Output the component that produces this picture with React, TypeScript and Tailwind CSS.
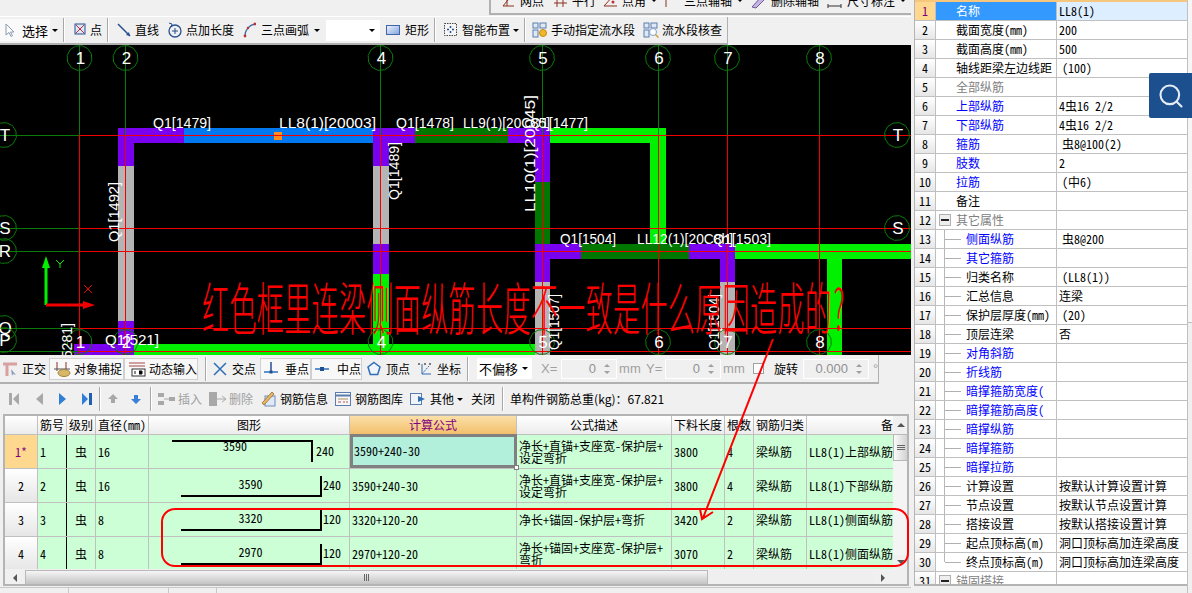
import React from "react";
import { Search } from "lucide-react";

const Ico = ({ children, w = 16 }: { children: React.ReactNode; w?: number }) => (
  <svg width={w} height={16} viewBox={`0 0 ${w} 16`} className="shrink-0">
    {children}
  </svg>
);

const Caret = ({ className = "" }: { className?: string }) => (
  <span className={`w-0 h-0 shrink-0 border-x-[3px] border-t-[3px] border-x-transparent border-t-black ${className}`} />
);

const Sep = ({ className = "" }: { className?: string }) => (
  <span className={`w-[2px] h-[24px] shrink-0 bg-[#a8a8a8] border-r border-white ${className}`} />
);

const Tool = ({ icon, label, className = "", muted, gap = "gap-[5px]" }: { icon?: React.ReactNode; label: string; className?: string; muted?: boolean; gap?: string }) => (
  <span className={`flex items-center shrink-0 whitespace-nowrap ${gap} ${muted ? "text-[#a0a0a0]" : ""} ${className}`}>
    {icon}
    {label}
  </span>
);

// toolbar icons
const icons = {
  cursor: <Ico><path d="M4 2v11l3-2.5 2 4 1.500-.8-2-3.700h3.500z" fill="#fff" stroke="#8a9ab0" /></Ico>,
  point: <Ico w={12}><rect x="1" y="2" width="10" height="10" fill="#dde6f5" stroke="#27508f" /><path d="M2 3l8 8M10 3l-8 8" stroke="#c0303a" /></Ico>,
  line: <Ico w={14}><path d="M1 2l12 12" stroke="#27508f" strokeWidth="1.500" /><path d="M13 14l-4-1 3-3z" fill="#27508f" /></Ico>,
  lenAdd: <Ico><circle cx="8" cy="9" r="6" fill="none" stroke="#27508f" strokeWidth="1.300" /><path d="M5 9h6M8 6v6" stroke="#27508f" /><path d="M2 1l3 1-1 3" fill="none" stroke="#27508f" /></Ico>,
  arc: <Ico w={13}><path d="M2 14C2 8 6 3 12 2" fill="none" stroke="#3b6a9f" strokeWidth="1.300" /><circle cx="2" cy="14" r="1.400" fill="#c0303a" /><circle cx="12" cy="2" r="1.400" fill="#c0303a" /><circle cx="5" cy="6" r="1.200" fill="#c0303a" /></Ico>,
  rect: <Ico w={14}><defs><linearGradient id="rg" x1="0" y1="0" x2="1" y2="1"><stop offset="0" stopColor="#f2f6fd" /><stop offset="1" stopColor="#7ea2de" /></linearGradient></defs><rect x="0.500" y="3.500" width="13" height="9" fill="url(#rg)" stroke="#3f66a8" /></Ico>,
  smart: <Ico w={15}><rect x="1.500" y="1.500" width="12" height="12" fill="#f6f6f6" stroke="#444" strokeDasharray="1.500 1" /><path d="M7.500 4v2M7.500 9v2M4 7.500h2M9 7.500h2" stroke="#27508f" strokeWidth="1.500" /></Ico>,
  flow: <Ico><rect x="1" y="1" width="5" height="5" fill="#dfe8f7" stroke="#5a7cae" /><rect x="8" y="1" width="6" height="5" fill="#dfe8f7" stroke="#5a7cae" /><rect x="1" y="8" width="5" height="7" fill="#dfe8f7" stroke="#5a7cae" /><circle cx="11" cy="11" r="3.500" fill="#f0b82a" stroke="#c98a10" /></Ico>,
  flowCheck: <Ico><rect x="1" y="1" width="5" height="5" fill="#dfe8f7" stroke="#5a7cae" /><rect x="8" y="1" width="6" height="5" fill="#dfe8f7" stroke="#5a7cae" /><rect x="1" y="8" width="5" height="7" fill="#dfe8f7" stroke="#5a7cae" /><circle cx="10" cy="10" r="3.500" fill="#fff" stroke="#7fa3c9" /><path d="M12.500 12.500l3 3" stroke="#c9a23a" strokeWidth="1.500" /></Ico>,
  ortho: <Ico><path d="M1 3h14M5 3v12" stroke="#d8a0a0" strokeWidth="3" /><path d="M9 8l5 6-3-1-1 2z" fill="#8aa0b8" /></Ico>,
  snap: <Ico w={18}><path d="M4 1v9M13 1v9" stroke="#8a3020" /><path d="M1 8h16" stroke="#555" /><ellipse cx="11" cy="12" rx="6" ry="3.500" fill="#d8b868" stroke="#a0823c" /></Ico>,
  dyn: <Ico w={18}><path d="M1 2h16M1 5h16" stroke="#a84848" /><rect x="4" y="8" width="13" height="7" fill="#fff" stroke="#333" /><path d="M7 10v3M11 10h3v3h-3" stroke="#111" /></Ico>,
  cross: <Ico><path d="M2 2l12 12M14 2L2 14" stroke="#2f6db5" strokeWidth="1.500" /></Ico>,
  perp: <Ico><path d="M1 11h14" stroke="#5f93cf" strokeWidth="2" /><path d="M8 1v10" stroke="#27508f" strokeWidth="1.500" /><rect x="6.500" y="9.500" width="3" height="3" fill="#27508f" /></Ico>,
  mid: <Ico><path d="M1 8h14" stroke="#5f93cf" strokeWidth="2" /><rect x="6" y="6" width="4" height="4" fill="#1f4f95" /></Ico>,
  vertex: <Ico><path d="M8 1.500l6 4.500-2.300 7.500H4.300L2 6z" fill="#eef4fb" stroke="#2f6db5" strokeWidth="1.500" /></Ico>,
  coord: <Ico><path d="M5 3v10h9" fill="none" stroke="#2f6db5" /><path d="M5 13l7-8" stroke="#2f6db5" strokeDasharray="2 1" /><circle cx="2" cy="3" r="1" fill="#555" /><circle cx="13" cy="3" r="1" fill="#555" /><circle cx="8" cy="3" r="1" fill="#555" /></Ico>,
  first: <Ico w={10}><rect x="0" y="2" width="3" height="12" fill="#a8a8a8" /><path d="M10 2v12L4 8z" fill="#a8a8a8" /></Ico>,
  prev: <Ico w={8}><path d="M8 2v12L1 8z" fill="#a8a8a8" /></Ico>,
  next: <Ico w={8}><path d="M0 2v12l7-6z" fill="#2f7fd6" /></Ico>,
  last: <Ico w={10}><path d="M0 2v12l6-6z" fill="#2f7fd6" /><rect x="7" y="2" width="3" height="12" fill="#1d5fb0" /></Ico>,
  up: <Ico w={10}><path d="M5 3l5 5H7v4H3V8H0z" fill="#a8a8a8" /></Ico>,
  down: <Ico w={10}><path d="M5 13l5-5H7V4H3v4H0z" fill="#3a7fd6" /></Ico>,
  insert: <Ico w={18}><rect x="0" y="2" width="6" height="4" fill="#a8a8a8" /><rect x="0" y="10" width="6" height="4" fill="#a8a8a8" /><rect x="11" y="6" width="6" height="4" fill="#a8a8a8" /><path d="M6 8h5" stroke="#a8a8a8" /></Ico>,
  del: <Ico w={18}><rect x="0" y="1" width="8" height="14" fill="#a8a8a8" /><path d="M8 8h9M13 5l4 3-4 3" fill="none" stroke="#a8a8a8" /></Ico>,
  info: <Ico w={15}><rect x="4" y="5" width="10" height="10" fill="#dfe8f7" stroke="#6c8cba" /><path d="M1 12L11 1l2 2L3 14z" fill="#e8b860" stroke="#8a5a20" strokeWidth="0.700" /></Ico>,
  lib: <Ico><rect x="0.500" y="1.500" width="15" height="13" fill="#f6f6f6" stroke="#5a7cae" /><path d="M1 4.500h14" stroke="#5a7cae" strokeWidth="2" /><path d="M3 8h10" stroke="#a89060" /><path d="M3 11h3M8 11h2M11 11h2" stroke="#c05050" /></Ico>,
  other: <Ico><rect x="0.500" y="2.500" width="11" height="11" fill="#f0f3f8" stroke="#5a7cae" /><path d="M8 5l7 3-7 3z" fill="#2f6db5" /></Ico>,
  net: <Ico w={14}><path d="M2 13L12 1M2 13h11M6 3v10" stroke="#8a3020" /></Ico>,
  parallel: <Ico w={14}><path d="M1 4h13M1 10h13M4 0v14M10 0v14" stroke="#8a3020" /></Ico>,
  angle: <Ico w={14}><path d="M1 13L11 2M1 13h13" stroke="#8a3020" /><circle cx="10" cy="9" r="1.500" fill="#c0303a" /></Ico>,
  tri: <Ico><path d="M3 14V2M3 4h12M9 1v6" stroke="#8a3020" /></Ico>,
  erase: <Ico><path d="M2 14L11 4l3 3-8 8z" fill="#c9b3e0" stroke="#6a5a9a" /><path d="M11 4l2-3 2 2-1 4" fill="#4a78c0" /></Ico>,
  dim: <Ico w={15}><path d="M1 11v4M14 11v4M1 13h13" stroke="#333" /><rect x="1" y="3" width="3" height="3" fill="#3ba03b" /></Ico>,
};

// canvas
const poly = (cx: number, cy: number, r: number) =>
  Array.from({ length: 12 }, (_, i) => {
    const a = (i * Math.PI) / 6 + 0.2;
    return `${(cx + r * Math.cos(a)).toFixed(1)},${(cy + r * Math.sin(a)).toFixed(1)}`;
  }).join(" ");

const P = "#7a00f0";
const B = "#00f000";
const D = "#007800";
const G = "#b4b4b4";

const walls: [number, number, number, number, string][] = [
  [118, 128, 66, 15, P], [118, 128, 16, 38, P], [118, 166, 16, 155, G], [118, 321, 16, 34, P], [74, 344, 60, 11, P],
  [134, 344, 416, 11, B], [184, 128, 189, 15, "#0078f0"], [373, 128, 42, 15, P], [373, 128, 16, 38, P],
  [373, 166, 16, 78, G], [373, 244, 16, 30, P], [373, 274, 16, 70, B], [415, 128, 93, 15, D], [508, 128, 42, 15, P],
  [535, 128, 15, 54, P], [535, 182, 15, 62, D], [550, 128, 116, 15, B], [650, 128, 16, 116, B], [535, 244, 46, 15, P],
  [581, 244, 108, 15, D], [689, 244, 46, 15, P], [535, 259, 15, 23, P], [535, 282, 15, 73, G], [720, 259, 15, 23, P],
  [720, 282, 15, 73, G], [735, 244, 176, 15, B], [827, 259, 15, 96, B], [274, 132, 8, 8, "#ff8c1a"],
];

const bubbles: [string, number, number][] = [
  ["1", 79.5, 58], ["2", 125.5, 58], ["4", 380.5, 58], ["5", 542, 58], ["6", 658, 58], ["7", 727, 58], ["8", 819, 58],
  ["T", 897, 135], ["S", 897, 228], ["T", 4, 135], ["S", 4, 228], ["R", 4, 251], ["Q", 4, 328], ["P", 4, 340],
  ["1", 79.5, 342], ["2", 125.5, 342], ["4", 380.5, 342], ["5", 542, 342], ["6", 658, 342], ["7", 727, 342], ["8", 819, 342],
];

const labels: [string, number, number, number][] = [
  ["Q1[1479]", 153, 128, 58], ["LL8(1)[20003]", 279, 128, 97], ["Q1[1478]", 396, 128, 58], ["LL9(1)[20C85]", 463, 128, 87],
  ["Q1[1477]", 530, 128, 58], ["Q1[521]", 105, 345, 54], ["Q1[1504]", 560, 244, 56], ["LL12(1)[20C8h]", 637, 244, 96], ["Q1[1503]", 713, 244, 58],
];

const vLabels: [string, number, number, number][] = [
  ["Q1[1492]", 119, 242, 60], ["Q1[1489]", 399, 200, 58], ["LL10(1)[20045]", 535, 212, 117], ["Q1[1507]", 559, 350, 56],
  ["Q1[1504]", 719, 350, 56], ["Q1[5281]", 72, 381, 58],
];

const Canvas = () => (
  <svg width={911} height={310} viewBox="0 45 911 310" className="block bg-black shrink-0">
    <g shapeRendering="crispEdges">
      {walls.map(([x, y, w, h, c], i) => (
        <rect key={i} x={x} y={y} width={w} height={h} fill={c} />
      ))}
      {[79.5, 125.5, 380.5, 542.5, 658.5, 727.5, 819.5].map((x) => (
        <g key={x}>
          <line x1={x} y1={45} x2={x} y2={135} stroke="#0a7a0a" />
          <line x1={x} y1={135} x2={x} y2={355} stroke="#f00000" />
        </g>
      ))}
      {[135.5, 228.5, 251.5, 328.5, 351.5].map((y) => (
        <g key={y}>
          <line x1={0} y1={y} x2={79} y2={y} stroke="#0a7a0a" />
          <line x1={79} y1={y} x2={911} y2={y} stroke="#f00000" />
        </g>
      ))}
    </g>
    {bubbles.map(([t, x, y], i) => (
      <g key={i}>
        <polygon points={poly(x, y, 12.5)} fill="none" stroke="#0a7a0a" />
        <text x={x + 1} y={y + 6} textAnchor="middle" fontSize={17} fill="#fff" fontFamily="Liberation Sans, sans-serif">{t}</text>
      </g>
    ))}
    {labels.map(([t, x, y, w], i) => (
      <text key={i} x={x} y={y} fontSize={14} textLength={w} lengthAdjust="spacingAndGlyphs" fill="#fff" fontFamily="Liberation Sans, sans-serif">{t}</text>
    ))}
    {vLabels.map(([t, x, y, w], i) => (
      <text key={i} transform={`translate(${x} ${y}) rotate(-90)`} fontSize={14} textLength={w} lengthAdjust="spacingAndGlyphs" fill="#fff" fontFamily="Liberation Sans, sans-serif">{t}</text>
    ))}
    <path d="M46 305V262" stroke="#00f000" strokeWidth="3" />
    <path d="M46 256l-4 12h8z" fill="#00f000" />
    <path d="M46 305h38" stroke="#f00000" strokeWidth="3" />
    <path d="M95 305l-12-4v8z" fill="#f00000" />
    <path d="M56 260l4 4 4-4M60 264v4" fill="none" stroke="#00f000" />
    <path d="M84 285l8 8M92 285l-8 8" stroke="#f00000" />
  </svg>
);

// property panel
type Prop = { name: string; value?: string; shift?: boolean; color?: string; tree?: boolean; group?: boolean; last?: boolean };
const BLUE = "text-[#0000ff]";
const GRAY = "text-[#808080]";
const props: Prop[] = [
  { name: "名称", value: "LL8(1)" },
  { name: "截面宽度(mm)", value: "200" },
  { name: "截面高度(mm)", value: "500" },
  { name: "轴线距梁左边线距", value: "(100)", shift: true },
  { name: "全部纵筋", color: GRAY },
  { name: "上部纵筋", value: "4虫16 2/2", color: BLUE },
  { name: "下部纵筋", value: "4虫16 2/2", color: BLUE },
  { name: "箍筋", value: "虫8@100(2)", shift: true, color: BLUE },
  { name: "肢数", value: "2", color: BLUE },
  { name: "拉筋", value: "(中6)", shift: true, color: BLUE },
  { name: "备注" },
  { name: "其它属性", color: GRAY, group: true },
  { name: "侧面纵筋", value: "虫8@200", shift: true, color: BLUE, tree: true },
  { name: "其它箍筋", color: BLUE, tree: true },
  { name: "归类名称", value: "(LL8(1))", shift: true, tree: true },
  { name: "汇总信息", value: "连梁", tree: true },
  { name: "保护层厚度(mm)", value: "(20)", shift: true, tree: true },
  { name: "顶层连梁", value: "否", tree: true },
  { name: "对角斜筋", color: BLUE, tree: true },
  { name: "折线筋", color: BLUE, tree: true },
  { name: "暗撑箍筋宽度(", color: BLUE, tree: true },
  { name: "暗撑箍筋高度(", color: BLUE, tree: true },
  { name: "暗撑纵筋", color: BLUE, tree: true },
  { name: "暗撑箍筋", color: BLUE, tree: true },
  { name: "暗撑拉筋", color: BLUE, tree: true },
  { name: "计算设置", value: "按默认计算设置计算", tree: true },
  { name: "节点设置", value: "按默认节点设置计算", tree: true },
  { name: "搭接设置", value: "按默认搭接设置计算", tree: true },
  { name: "起点顶标高(m)", value: "洞口顶标高加连梁高度", tree: true },
  { name: "终点顶标高(m)", value: "洞口顶标高加连梁高度", tree: true, last: true },
  { name: "锚固搭接", color: GRAY, group: true },
];

const GroupBox = () => (
  <span className="ml-[3px] mr-[5px] w-[12px] h-[12px] shrink-0 border border-[#b0b0b0] bg-[#eeeeee] flex items-center justify-center">
    <span className="w-[8px] h-[2px] bg-[#222]" />
  </span>
);

const PropRow = ({ p, i }: { p: Prop; i: number }) => {
  const selected = i === 0;
  return (
    <div className="flex h-[19px] shrink-0 border-b border-[#c0c0c0]">
      <div className={`w-[21px] shrink-0 flex items-center justify-center border-r border-[#c0c0c0] ${selected ? "bg-[#ffd88f] text-[#800080]" : "bg-gradient-to-b from-white to-[#e6e6e6]"}`}>
        {i + 1}
      </div>
      <div className={`w-[121px] shrink-0 flex items-center overflow-hidden whitespace-nowrap border-r border-[#c0c0c0] ${selected ? "bg-[#3399ff] text-white" : "bg-white"} ${p.color ?? ""}`}>
        {p.group && <GroupBox />}
        {p.tree && (
          <>
            <span className={`w-[9px] shrink-0 border-r border-[#b8b8b8] ${p.last ? "h-1/2 self-start" : "h-[20px]"}`} />
            <span className="w-[16px] h-px shrink-0 bg-[#b0b0b0] mr-[5px]" />
          </>
        )}
        {!p.group && !p.tree && <span className="w-[20px] shrink-0" />}
        {p.name}
      </div>
      <div className={`w-[130px] shrink-0 flex items-center whitespace-pre overflow-hidden ${p.shift ? "pl-[5px]" : "pl-[2px]"} ${selected ? "bg-[#dceeff]" : "bg-white"}`}>
        {p.value}
      </div>
    </div>
  );
};

// rebar grid
const cols = "grid grid-cols-[33px_29px_29px_53px_201px_167px_155px_53px_29px_53px_86px]";
const head = ["", "筋号", "级别", "直径(mm)", "图形", "计算公式", "公式描述", "下料长度", "根数", "钢筋归类"];

const rows = [
  { no: "1", d: "16", l: "3590", e: "240", f: "3590+240-30", desc: "净长+直锚+支座宽-保护层+\n设定弯折", len: "3800", n: "4", note: "LL8(1)上部纵筋" },
  { no: "2", d: "16", l: "3590", e: "240", f: "3590+240-30", desc: "净长+直锚+支座宽-保护层+\n设定弯折", len: "3800", n: "4", note: "LL8(1)下部纵筋" },
  { no: "3", d: "8", l: "3320", e: "120", f: "3320+120-20", desc: "净长+锚固-保护层+弯折", len: "3420", n: "2", note: "LL8(1)侧面纵筋" },
  { no: "4", d: "8", l: "2970", e: "120", f: "2970+120-20", desc: "净长+锚固+支座宽-保护层+\n弯折", len: "3070", n: "2", note: "LL8(1)侧面纵筋" },
];

const Cell = ({ children, className = "" }: { children?: React.ReactNode; className?: string }) => (
  <div className={`flex items-center pl-[2px] overflow-hidden whitespace-nowrap border-r border-[#c0c0c0] ${className}`}>{children}</div>
);

const Shape = ({ l, e, top }: { l: string; e: string; top: boolean }) =>
  top ? (
    <div className="flex items-start h-full pt-[5px] pl-[23px]">
      <div className="w-[141px] h-[12px] border-t-2 border-black relative">
        <span className="block pl-[51px] leading-[8px]">{l}</span>
        <span className="absolute right-0 top-0 w-[2px] h-[20px] bg-black" />
      </div>
      <span className="pl-[3px] pt-[5px]">{e}</span>
    </div>
  ) : (
    <div className="flex items-end h-full pb-[5px] pl-[32px]">
      <div className="w-[141px] h-[21px] pb-[4px] border-b-2 border-r-2 border-black flex items-center justify-center">{l}</div>
      <span className="pl-[1px] pb-[6px]">{e}</span>
    </div>
  );

const BarBtn = ({ children, className = "" }: { children: React.ReactNode; className?: string }) => (
  <div className={`flex items-center justify-center bg-[#f0f0f0] shrink-0 ${className}`}>{children}</div>
);

const RebarGrid = () => (
  <div className="flex flex-col w-[906px] h-[172px] ml-[3px] border-2 border-[#b4b4b4] bg-[#f0f0f0] overflow-hidden">
    <div className="flex h-[153px] shrink-0">
      <div className="w-[888px] shrink-0 overflow-hidden">
        <div className={`${cols} h-[18px]`}>
          {head.map((h, i) => (
            <div key={i} className={`flex items-center justify-center border-r border-[#c0c0c0] whitespace-nowrap overflow-hidden ${i === 5 ? "bg-gradient-to-b from-[#fbe0a8] to-[#f2bf6b] text-[#800080]" : "bg-gradient-to-b from-white to-[#ececec]"}`}>
              {h}
            </div>
          ))}
          <div className="flex items-center justify-end bg-gradient-to-b from-white to-[#ececec]">备</div>
        </div>
        {rows.map((r, i) => (
          <div key={r.no} className={`${cols} h-[34px] border-t border-[#c0c0c0] bg-[#ccffd6]`}>
            <div className={`flex items-center justify-center border-r border-[#c0c0c0] ${i === 0 ? "bg-[#ffd88f] text-[#800080]" : "bg-gradient-to-b from-white to-[#e6e6e6]"}`}>
              {i === 0 ? "1*" : r.no}
            </div>
            <Cell className="border-r-black">{r.no}</Cell>
            <div className="flex items-center justify-center border-r border-[#c0c0c0]">虫</div>
            <Cell>{r.d}</Cell>
            <div className="border-r border-[#c0c0c0]"><Shape l={r.l} e={r.e} top={i === 0} /></div>
            {i === 0 ? (
              <div className="relative flex items-center pl-[1px] bg-[#b3f0dc] border-[3px] border-[#808080] -mt-[1px]">
                {r.f}
                <span className="absolute -right-[5px] -bottom-[5px] w-[5px] h-[5px] bg-white border border-[#808080]" />
              </div>
            ) : (
              <Cell>{r.f}</Cell>
            )}
            <Cell className="whitespace-pre-line leading-[12px]">{r.desc}</Cell>
            <Cell>{r.len}</Cell>
            <Cell>{r.n}</Cell>
            <Cell>梁纵筋</Cell>
            <div className="flex items-center pl-[2px] overflow-hidden whitespace-nowrap">{r.note}</div>
          </div>
        ))}
      </div>
      <div className="w-[16px] shrink-0 flex flex-col bg-[#f4f4f4]">
        <BarBtn className="h-[18px]"><span className="w-0 h-0 border-x-[4px] border-b-[4px] border-x-transparent border-b-[#555]" /></BarBtn>
        <div className="h-[27px] shrink-0 bg-gradient-to-r from-[#fafafa] to-[#d0d0d0] border border-[#b8b8b8] flex flex-col items-center justify-center gap-[1px]">
          <span className="w-[8px] h-px bg-[#666]" /><span className="w-[8px] h-px bg-[#666]" /><span className="w-[8px] h-px bg-[#666]" />
        </div>
        <div className="flex-1" />
        <BarBtn className="h-[14px]"><span className="w-0 h-0 border-x-[4px] border-t-[4px] border-x-transparent border-t-[#555]" /></BarBtn>
      </div>
    </div>
    <div className="flex h-[15px] shrink-0 mt-px">
      <BarBtn className="w-[20px]"><span className="w-0 h-0 border-y-[4px] border-r-[4px] border-y-transparent border-r-[#555]" /></BarBtn>
      <div className="w-[683px] shrink-0 bg-gradient-to-b from-[#f6f6f6] to-[#c4c4c4] border border-[#b8b8b8] flex items-center justify-center gap-[1px]">
        <span className="w-px h-[7px] bg-[#666]" /><span className="w-px h-[7px] bg-[#666]" /><span className="w-px h-[7px] bg-[#666]" />
      </div>
      <div className="w-[166px] shrink-0 bg-[#efefef]" />
      <BarBtn className="w-[18px]"><span className="w-0 h-0 border-y-[4px] border-l-[4px] border-y-transparent border-l-[#555]" /></BarBtn>
    </div>
  </div>
);

const SpinInput = ({ value, className = "" }: { value: string; className?: string }) => (
  <span className={`h-[20px] border border-white bg-[#f0f0f0] flex items-center justify-end shrink-0 text-[#909090] text-[13px] pr-[6px] [font-family:'Liberation_Sans',sans-serif] [font-feature-settings:normal] ${className}`}>
    {value}
    <span className="ml-[8px] flex flex-col gap-[4px]">
      <span className="w-0 h-0 border-x-[3px] border-b-[3px] border-x-transparent border-b-[#a0a0a0]" />
      <span className="w-0 h-0 border-x-[3px] border-t-[3px] border-x-transparent border-t-[#a0a0a0]" />
    </span>
  </span>
);

const dimLabel = "text-[#a0a0a0] shrink-0 text-[13px] [font-family:'Liberation_Sans',sans-serif] [font-feature-settings:normal]";

export default function App() {
  return (
    <div className="relative w-[1192px] h-[593px] overflow-hidden flex bg-[#f0f0f0] text-[12px] leading-none text-black [font-family:'Noto_Sans_CJK_SC',sans-serif] [font-feature-settings:'hwid']">
      {/* left side */}
      <div className="w-[911px] shrink-0 flex flex-col">
        <div className="h-[17px] shrink-0 border-b border-white">
          <div className="ml-[489px] h-[15px] border-l-2 border-b-2 border-[#b0b0b0] overflow-hidden flex items-center pb-[12px] shrink-0">
            <Tool icon={icons.net} label="网点" className="ml-[10px]" />
            <Tool icon={icons.parallel} label="平行" className="ml-[9px]" />
            <Tool icon={icons.angle} label="点角" className="ml-[7px]" />
            <Caret className="ml-[5px]" />
            <Tool icon={icons.tri} label="三点辅轴" className="ml-[6px]" />
            <Caret className="ml-[5px]" />
            <Tool icon={icons.erase} label="删除辅轴" className="ml-[7px]" />
            <Tool icon={icons.dim} label="尺寸标注" className="ml-[8px]" />
            <Caret className="ml-[5px]" />
          </div>
        </div>
        <div className="h-[28px] shrink-0 flex items-center w-[728px] border-b-2 border-r border-[#b0b0b0]">
          <span className="flex items-center w-[50px] h-[22px] bg-[#fafafa] shrink-0 pl-[2px] text-[13px]">
            <Tool icon={icons.cursor} label="选择" gap="gap-[4px]" />
          </span>
          <Caret className="ml-[2px]" />
          <Sep className="ml-[5px]" />
          <Tool icon={icons.point} label="点" gap="gap-[4px]" className="ml-[9px]" />
          <Sep className="ml-[5px]" />
          <Tool icon={icons.line} label="直线" gap="gap-[4px]" className="ml-[8px]" />
          <Tool icon={icons.lenAdd} label="点加长度" gap="gap-[3px]" className="ml-[8px]" />
          <Tool icon={icons.arc} label="三点画弧" className="ml-[9px]" />
          <Caret className="ml-[5px]" />
          <span className="ml-[6px] w-[54px] h-[21px] bg-white flex items-center justify-end pr-[5px] shrink-0"><Caret /></span>
          <Tool icon={icons.rect} label="矩形" className="ml-[6px]" />
          <Sep className="ml-[5px]" />
          <Tool icon={icons.smart} label="智能布置" gap="gap-[4px]" className="ml-[7px]" />
          <Caret className="ml-[3px]" />
          <Sep className="ml-[5px]" />
          <Tool icon={icons.flow} label="手动指定流水段" gap="gap-[3px]" className="ml-[6px]" />
          <Tool icon={icons.flowCheck} label="流水段核查" gap="gap-[3px]" className="ml-[8px]" />
        </div>
        <Canvas />
        {/* snap bar */}
        <div className="h-[29px] shrink-0 flex items-center w-[879px] border-b-2 border-r border-[#b0b0b0]">
          <Tool icon={icons.ortho} label="正交" gap="gap-[4px]" className="ml-[2px]" />
          <Tool icon={icons.snap} label="对象捕捉" gap="gap-[3px]" className="ml-[3px] w-[75px] h-[22px] bg-[#f8f8f8] border border-[#d0d0d0] pl-[3px]" />
          <Tool icon={icons.dyn} label="动态输入" gap="gap-[3px]" className="w-[74px] h-[22px] bg-[#f8f8f8] border border-[#d0d0d0] pl-[3px]" />
          <Sep className="ml-[7px]" />
          <Tool icon={icons.cross} label="交点" gap="gap-[4px]" className="ml-[5px]" />
          <Tool icon={icons.perp} label="垂点" gap="gap-[6px]" className="ml-[4px] w-[51px] h-[22px] bg-[#f8f8f8] border border-[#d0d0d0] pl-[2px]" />
          <Tool icon={icons.mid} label="中点" gap="gap-[7px]" className="w-[51px] h-[22px] bg-[#f8f8f8] border border-[#d0d0d0] pl-[2px]" />
          <Tool icon={icons.vertex} label="顶点" gap="gap-[4px]" className="ml-[4px]" />
          <Tool icon={icons.coord} label="坐标" gap="gap-[4px]" className="ml-[7px]" />
          <Sep className="ml-[6px]" />
          <span className="ml-[8px] w-[55px] h-[21px] bg-white flex items-center justify-between px-[2px] shrink-0 text-[13px]">不偏移<Caret className="mr-[2px]" /></span>
          <span className={`ml-[9px] w-[20px] ${dimLabel}`}>X=</span>
          <SpinInput value="0" className="w-[56px]" />
          <span className={`ml-[2px] w-[27px] ${dimLabel}`}>mm</span>
          <span className={`w-[19px] ${dimLabel}`}>Y=</span>
          <SpinInput value="0" className="w-[56px]" />
          <span className={`ml-[2px] w-[24px] ${dimLabel}`}>mm</span>
          <span className="ml-[6px] w-[11px] h-[11px] bg-white border border-[#a0a0a0] shrink-0" />
          <span className="ml-[10px] shrink-0">旋转</span>
          <SpinInput value="0.000" className="ml-[5px] w-[66px]" />
          <span className={`ml-[4px] ${dimLabel}`}>°</span>
        </div>
        {/* grid toolbar */}
        <div className="h-[30px] shrink-0 flex items-center">
          <span className="ml-[9px] shrink-0">{icons.first}</span>
          <span className="ml-[16px] shrink-0">{icons.prev}</span>
          <span className="ml-[16px] shrink-0">{icons.next}</span>
          <span className="ml-[15px] shrink-0">{icons.last}</span>
          <Sep className="ml-[7px]" />
          <span className="ml-[7px] shrink-0">{icons.up}</span>
          <span className="ml-[13px] shrink-0">{icons.down}</span>
          <Sep className="ml-[9px]" />
          <Tool icon={icons.insert} label="插入" muted gap="gap-[2px]" className="ml-[6px]" />
          <Tool icon={icons.del} label="删除" muted gap="gap-[2px]" className="ml-[7px]" />
          <Tool icon={icons.info} label="钢筋信息" gap="gap-[4px]" className="ml-[8px]" />
          <Tool icon={icons.lib} label="钢筋图库" gap="gap-[4px]" className="ml-[7px]" />
          <Tool icon={icons.other} label="其他" gap="gap-[4px]" className="ml-[7px]" />
          <Caret className="ml-[3px]" />
          <span className="ml-[8px] shrink-0">关闭</span>
          <Sep className="ml-[7px]" />
          <span className="ml-[6px] shrink-0 whitespace-nowrap [font-feature-settings:normal]">单构件钢筋总重(kg)：67.821</span>
        </div>
        <RebarGrid />
        <div className="flex-1 flex mt-px gap-[3px] border-t border-[#c8c8c8]">
          <span className="w-[69px] border-r border-[#c8c8c8]" />
          <span className="w-[97px] border-r border-[#c8c8c8]" />
          <span className="w-[45px] border-r border-[#c8c8c8]" />
        </div>
      </div>

      {/* property panel */}
      <div className="w-[281px] shrink-0 flex">
        <div className="ml-[3px] w-[273px] shrink-0 h-[586px] border-l border-b-2 border-[#b4b4b4] flex flex-col overflow-hidden">
          <div className="h-[2px] shrink-0 bg-[#f5c67c]" />
          {props.map((p, i) => (
            <PropRow key={i} p={p} i={i} />
          ))}
        </div>
        <div className="w-[5px] shrink-0 border-l border-[#c0c0c0]">
          <div className="h-[323px] border-b border-[#c0c0c0] bg-[#f6f6f6]" />
        </div>
      </div>

      {/* floating search button */}
      <div className="absolute right-0 top-[73px] w-[43px] h-[45px] rounded-l-[2px] bg-[#1c4f8e] flex items-center justify-center">
        <Search size={28} strokeWidth={1.800} className="text-[#e4ecf5]" />
      </div>

      {/* red annotation */}
      <span className="absolute left-[202px] top-[292px] text-[27px] font-light leading-[27px] tracking-[0.4px] text-[#ff0000] whitespace-nowrap scale-y-[2.1]">
        红色框里连梁侧面纵筋长度不一致是什么原因造成的?
      </span>
      <svg width={1192} height={593} className="absolute inset-0 pointer-events-none">
        <rect x={162} y={509} width={746} height={57} rx={13} fill="none" stroke="#ff0000" strokeWidth={2} />
        <path d="M773 339L703 518M700 509l2 10 11-7" fill="none" stroke="#ff0000" strokeWidth={2} />
      </svg>
    </div>
  );
}
